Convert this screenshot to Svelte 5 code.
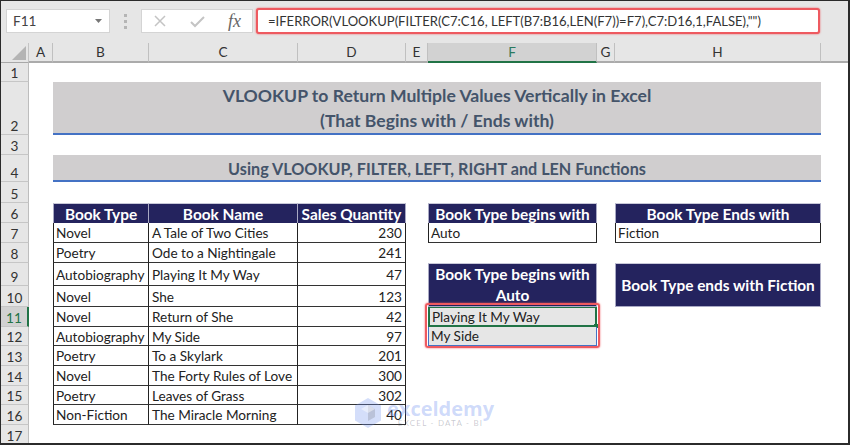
<script>
	const cols = ['A', 'B', 'C', 'D', 'E', 'F', 'G', 'H']
	const rowNums = Array.from({ length: 17 }, (_, i) => i + 1)

	const books = [
		['Novel', 'A Tale of Two Cities', 230],
		['Poetry', 'Ode to a Nightingale', 241],
		['Autobiography', 'Playing It My Way', 47],
		['Novel', 'She', 123],
		['Novel', 'Return of She', 42],
		['Autobiography', 'My Side', 97],
		['Poetry', 'To a Skylark', 201],
		['Novel', 'The Forty Rules of Love', 300],
		['Poetry', 'Leaves of Grass', 302],
		['Non-Fiction', 'The Miracle Morning', 40]
	]

	const formula = '=IFERROR(VLOOKUP(FILTER(C7:C16, LEFT(B7:B16,LEN(F7))=F7),C7:D16,1,FALSE),"")'
</script>

<div class="window">
	<div class="formula-bar">
		<div class="name-box">
			<span>F11</span>
			<svg width="7" height="4" viewBox="0 0 7 4"><path d="M0 0h7L3.500 4z" fill="#777" /></svg>
		</div>
		<div class="grip"><i></i><i></i><i></i></div>
		<div class="fx-box">
			<svg width="14" height="14" viewBox="0 0 14 14"><path d="M2 2l10 10M12 2L2 12" stroke="#c4c4c4" stroke-width="1.500" fill="none" /></svg>
			<svg width="15" height="14" viewBox="0 0 15 14"><path d="M1 8l4 4 9-9" stroke="#c4c4c4" stroke-width="2" fill="none" /></svg>
			<span class="fx">fx</span>
		</div>
		<div class="formula">{formula}</div>
	</div>

	<div class="sheet">
		<div class="corner"><svg width="14" height="14" viewBox="0 0 14 14"><path d="M14 0v14H0z" fill="#b4b4b4" /></svg></div>
		{#each cols as c, i}
			<div class="col-head" class:active={c === 'F'} style="grid-column:{i + 2}">{c}</div>
		{/each}
		<div class="col-head blank" style="grid-column:10"></div>

		{#each rowNums as n}
			<div class="row-head" class:active={n === 11} style="grid-row:{n + 1}">{n}</div>
		{/each}

		<div class="title" style="grid-area:3/3/4/10">
			<div>VLOOKUP to Return Multiple Values Vertically in Excel</div>
			<div>(That Begins with / Ends with)</div>
		</div>
		<div class="title sub" style="grid-area:5/3/6/10">Using VLOOKUP, FILTER, LEFT, RIGHT and LEN Functions</div>

		<div class="th first" style="grid-area:7/3">Book Type</div>
		<div class="th" style="grid-area:7/4">Book Name</div>
		<div class="th" style="grid-area:7/5">Sales Quantity</div>
		{#each books as b, i}
			<div class="td first" style="grid-area:{i + 8}/3">{b[0]}</div>
			<div class="td" style="grid-area:{i + 8}/4">{b[1]}</div>
			<div class="td num" style="grid-area:{i + 8}/5">{b[2]}</div>
		{/each}

		<div class="th first" style="grid-area:7/7">Book Type begins with</div>
		<div class="td first" style="grid-area:8/7">Auto</div>
		<div class="th first" style="grid-area:7/9">Book Type Ends with</div>
		<div class="td first" style="grid-area:8/9">Fiction</div>

		<div class="th first tall" style="grid-area:10/7/12/8">Book Type begins with Auto</div>
		<div class="th first tall" style="grid-area:10/9/12/10">Book Type ends with Fiction</div>

		<div class="res selected" style="grid-area:12/7">Playing It My Way<span class="handle"></span></div>
		<div class="res" style="grid-area:13/7">My Side</div>
	</div>

	<div class="red-box"></div>

	<div class="watermark">
		<svg width="28" height="31" viewBox="0 0 28 31">
			<path d="M14 0l13 7.500v15L14 30 1 22.500v-15z" fill="#6f93ee" opacity=".3" />
			<path d="M14 7l7 4v8l-7 4z" fill="#8a8f9c" opacity=".35" />
			<path d="M14 7l-7 4 7 4 7-4z" fill="#fff" opacity=".45" />
		</svg>
		<div class="wm-text">
			<div class="wm-name">exceldemy</div>
			<div class="wm-tag">EXCEL - DATA - BI</div>
		</div>
	</div>
</div>

<style>
	:global(body) {
		margin: 0;
		background: #fff;
	}

	.window {
		position: relative;
		box-sizing: border-box;
		width: 850px;
		height: 445px;
		overflow: hidden;
		border-top: 1px solid #2b2b2b;
		border-left: 1px solid #2b2b2b;
		border-right: 2px solid #2b2b2b;
		border-bottom: 2px solid #2b2b2b;
		font-family: Lato, 'Liberation Sans', sans-serif;
		font-size: 13.6px;
		color: #222;
	}

	.formula-bar {
		display: flex;
		align-items: center;
		height: 42px;
		padding: 0 0 2px 5px;
		box-sizing: border-box;
		background: #e6e6e6;
	}

	.name-box {
		display: flex;
		align-items: center;
		justify-content: space-between;
		box-sizing: border-box;
		width: 104px;
		height: 24px;
		padding: 0 7px 0 6px;
		background: #fff;
		border: 1px solid #d4d4d4;
		color: #444;
	}

	.grip {
		display: flex;
		flex-direction: column;
		gap: 3px;
		margin: 0 14px;
	}

	.grip i {
		display: block;
		width: 3px;
		height: 3px;
		background: #b5b5b5;
	}

	.fx-box {
		display: flex;
		align-items: center;
		box-sizing: border-box;
		width: 112px;
		height: 24px;
		gap: 23px;
		padding-left: 11px;
		background: #fff;
		border: 1px solid #d4d4d4;
	}

	.fx {
		font-family: 'Liberation Serif', serif;
		font-style: italic;
		font-size: 18px;
		color: #666;
	}

	.formula {
		box-sizing: border-box;
		width: 564px;
		height: 26px;
		margin-left: 3px;
		padding-left: 10px;
		line-height: 22px;
		background: #fff;
		border: 2px solid #ee5a60;
		border-radius: 3px;
		box-shadow: 0 0 2px #ee5a60;
		color: #333;
		font-size: 13.050px;
		white-space: nowrap;
	}

	.sheet {
		display: grid;
		grid-template-columns: 28px 24px 96px 149px 108px 22px 169px 18px 206px 1fr;
		grid-template-rows: 20px 19px 53px 20px 27px 21px 20px 20px 20px 23px 21px 20px 19px 20px 20px 19px 20px 20px;
		background: #fff;
	}

	.corner {
		grid-area: 1 / 1;
		display: flex;
		align-items: flex-end;
		justify-content: flex-end;
		padding: 0 2px 2px 0;
		background: #e6e6e6;
		border-bottom: 1px solid #a8a8a8;
		border-right: 1px solid #c4c4c4;
	}

	.col-head {
		grid-row: 1;
		display: flex;
		align-items: center;
		justify-content: center;
		box-sizing: border-box;
		background: #e6e6e6;
		border-right: 1px solid #c0c0c0;
		border-bottom: 2px solid #ababab;
		color: #333;
	}

	.col-head.blank {
		border-right: 0;
	}

	.col-head.active {
		background: #d2d2d2;
		border-bottom-color: #217346;
		color: #2b7a5f;
	}

	.row-head {
		grid-column: 1;
		display: flex;
		align-items: flex-end;
		justify-content: center;
		box-sizing: border-box;
		background: #e6e6e6;
		border-right: 1px solid #bdbdbd;
		border-bottom: 1px solid #c6c6c6;
		color: #333;
	}

	.row-head.active {
		background: #d2d2d2;
		border-right: 2px solid #217346;
		color: #217346;
	}

	.title {
		display: flex;
		flex-direction: column;
		align-items: center;
		justify-content: center;
		box-sizing: border-box;
		background: #d0cecf;
		border-bottom: 2px solid #4472c4;
		color: #44546a;
		font-weight: 700;
		font-size: 17.600px;
		line-height: 25px;
	}

	.title.sub {
		padding-top: 2px;
		font-size: 16.200px;
	}

	.th,
	.td,
	.res {
		display: flex;
		align-items: center;
		box-sizing: border-box;
		white-space: nowrap;
	}

	.th {
		justify-content: center;
		padding: 0 2px;
		background: #24235e;
		border-right: 1px solid #a9a9c4;
		border-top: 1px solid #c8c8d8;
		color: #fff;
		font-weight: 700;
		font-size: 15.400px;
	}

	.th.first {
		border-left: 1px solid #a9a9c4;
	}

	.th.tall {
		white-space: normal;
		text-align: center;
		line-height: 21px;
		border-bottom: 1px solid #a9a9c4;
	}

	.td {
		padding: 1px 3px 0;
		border-right: 1px solid #222;
		border-bottom: 1px solid #333;
	}

	.td.first {
		border-left: 1px solid #222;
		padding-left: 2px;
	}

	.td.num {
		justify-content: flex-end;
	}

	.res {
		position: relative;
		padding-left: 2px;
		background: #e6e6e6;
		border-right: 1px solid #4472c4;
		border-left: 1px solid #4472c4;
		border-bottom: 1px solid #4472c4;
	}

	.res.selected {
		border: 2px solid #217346;
		border-top-width: 1px;
		padding-top: 1px;
	}

	.handle {
		position: absolute;
		right: -3px;
		bottom: -3px;
		width: 4px;
		height: 4px;
		background: #217346;
	}

	.red-box {
		position: absolute;
		left: 424px;
		top: 302px;
		width: 171px;
		height: 41px;
		border: 2px solid #ee5a60;
		border-radius: 3px;
		box-shadow: 0 0 2px #ee5a60;
	}

	.watermark {
		position: absolute;
		left: 353px;
		top: 397px;
		display: flex;
		gap: 5px;
		pointer-events: none;
	}

	.wm-text {
		display: flex;
		flex-direction: column;
		align-items: center;
	}

	.wm-name {
		font-family: 'Open Sans', sans-serif;
		font-weight: 700;
		font-size: 20px;
		line-height: 21px;
		color: rgba(105, 140, 240, 0.32);
	}

	.wm-tag {
		margin-top: -1px;
		font-size: 8px;
		letter-spacing: 1.200px;
		line-height: 10px;
		color: rgba(90, 90, 110, 0.32);
	}
</style>
